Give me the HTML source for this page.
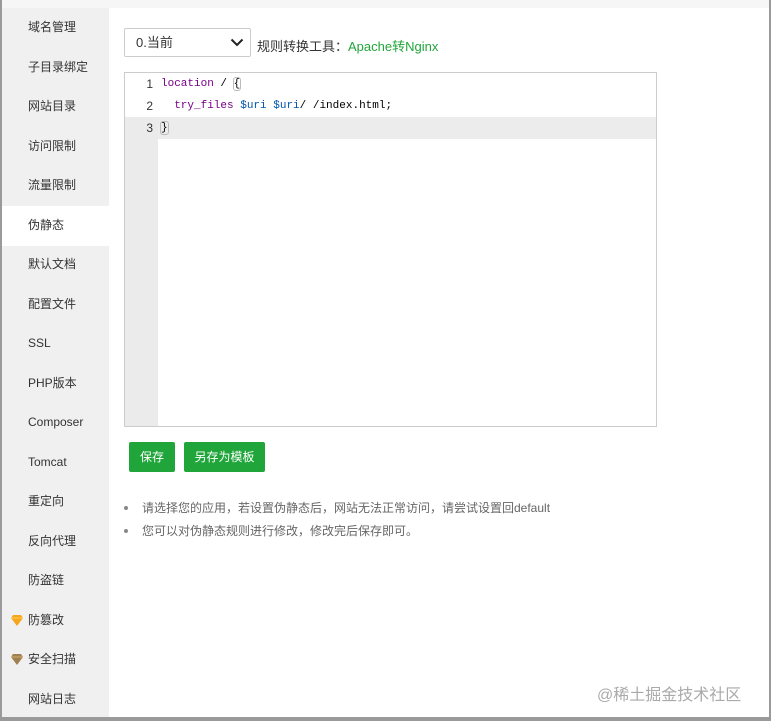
<!DOCTYPE html>
<html><head><meta charset="utf-8"><style>
*{margin:0;padding:0;box-sizing:border-box}
body{width:771px;height:721px;background:#9a9a9a;position:relative;overflow:hidden;font-family:"Liberation Sans","Microsoft YaHei","Noto Sans CJK SC",sans-serif;font-size:12px;color:#333}
#win{position:absolute;left:2px;top:0;width:767px;height:717px;background:#fff}
#topbar{position:absolute;left:0;top:0;width:767px;height:8px;background:#f6f6f6}
#side{position:absolute;left:0;top:8px;width:107px;height:709px;background:#f0f0f0}
.it{position:absolute;left:0;width:107px;height:39.5px;line-height:39px;padding-left:26px;font-size:12px;color:#333}
.it.act{background:#fff}
.gem{position:absolute;left:9px;top:14px}
#sel{position:absolute;left:122px;top:28px;width:127px;height:29px;border:1px solid #ccc;border-radius:2px;background:#fff;line-height:27px;padding-left:11px;font-size:13px}
#sel svg{position:absolute;right:6px;top:9px}
#tool{position:absolute;left:255px;top:36px;font-size:13px}
#tool span{color:#20a53a}
#ed{position:absolute;left:122px;top:72px;width:533px;height:355px;border:1px solid #ccc;background:#fff;font-family:"Liberation Mono",monospace;font-size:11px}
#gut{position:absolute;left:0;top:44px;width:33px;height:309px;background:#ebebeb}
.ln{position:absolute;left:0;width:28px;text-align:right;color:#333;height:22px;line-height:22px;font-family:"Liberation Sans",sans-serif;font-size:12px}
.cl{position:absolute;left:36px;height:22px;line-height:22px;color:#000;white-space:pre}
#hl{position:absolute;left:0;top:44px;width:531px;height:22px;background:#ececec}
.kw{color:#708}.vr{color:#05a}
.br{outline:1px solid #bbb;border-radius:2px}
.btn{position:absolute;top:442px;height:30px;line-height:30px;background:#20a53a;color:#fff;border-radius:2px;font-size:12px;text-align:center}
ul{position:absolute;left:122px;top:500px;list-style:none;color:#666;font-size:12px}
li{height:23px;line-height:16px;position:relative;padding-left:18px}
li:before{content:"";position:absolute;left:0;top:6px;width:4px;height:4px;border-radius:50%;background:#888}
#wm{position:absolute;left:595px;top:681px;color:#aaa;font-size:16px}
</style></head><body>
<div id="win">
<div id="topbar"></div>
<div id="side">
<div class="it" style="top:0">域名管理</div>
<div class="it" style="top:39.5px">子目录绑定</div>
<div class="it" style="top:79px">网站目录</div>
<div class="it" style="top:118.5px">访问限制</div>
<div class="it" style="top:158px">流量限制</div>
<div class="it act" style="top:198px">伪静态</div>
<div class="it" style="top:237px">默认文档</div>
<div class="it" style="top:276.5px">配置文件</div>
<div class="it" style="top:316px">SSL</div>
<div class="it" style="top:355.5px">PHP版本</div>
<div class="it" style="top:395px">Composer</div>
<div class="it" style="top:434.5px">Tomcat</div>
<div class="it" style="top:474px">重定向</div>
<div class="it" style="top:513.5px">反向代理</div>
<div class="it" style="top:553px">防盗链</div>
<div class="it" style="top:592.5px"><svg class="gem" width="12" height="11" viewBox="0 0 12 11"><path d="M2 0h8l2 3-6 8-6-8z" fill="#f7a51c"/><path d="M0 3h12" stroke="#fcd060" stroke-width="1"/></svg>防篡改</div>
<div class="it" style="top:632px"><svg class="gem" width="12" height="11" viewBox="0 0 12 11"><path d="M2 0h8l2 3-6 8-6-8z" fill="#a08050"/><path d="M0 3h12" stroke="#d0b070" stroke-width="1"/></svg>安全扫描</div>
<div class="it" style="top:671.5px">网站日志</div>
</div>
<div id="sel">0.当前<svg width="14" height="9" viewBox="0 0 14 9"><path d="M1.5 1.5l5.5 5.5 5.5-5.5" stroke="#222" stroke-width="2" fill="none"/></svg></div>
<div id="tool">规则转换工具：<span>Apache转Nginx</span></div>
<div id="ed">
<div id="hl"></div>
<div id="gut"></div>
<div class="ln" style="top:0">1</div>
<div class="ln" style="top:22px">2</div>
<div class="ln" style="top:44px">3</div>
<div class="cl" style="top:0"><span class="kw">location</span> / <span class="br">{</span></div>
<div class="cl" style="top:22px">  <span class="kw">try_files</span> <span class="vr">$uri</span> <span class="vr">$uri</span>/ /index.html;</div>
<div class="cl" style="top:44px"><span class="br">}</span></div>
</div>
<div class="btn" style="left:127px;width:46px">保存</div>
<div class="btn" style="left:182px;width:81px">另存为模板</div>
<ul><li>请选择您的应用，若设置伪静态后，网站无法正常访问，请尝试设置回default</li><li>您可以对伪静态规则进行修改，修改完后保存即可。</li></ul>
<div id="wm">@稀土掘金技术社区</div>
</div>
</body></html>
